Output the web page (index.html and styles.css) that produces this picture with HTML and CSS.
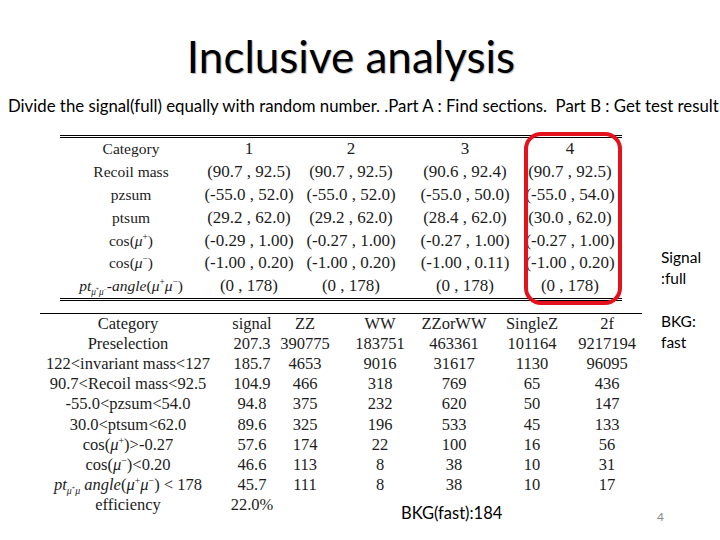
FILE: index.html
```html
<!DOCTYPE html>
<html>
<head>
<meta charset="utf-8">
<link rel="stylesheet" href="styles.css">
</head>
<body>
<div class="slide">
  <h1 class="title">Inclusive analysis</h1>
  <p class="subtitle">Divide the signal(full) equally with random number. .Part A : Find sections.&nbsp; Part B : Get test result</p>
  <div class="content">
    <div class="tables">
      <div class="t1">
        <div class="grid1">
          <div class="c lab">Category</div><div class="c">1</div><div class="c">2</div><div class="c">3</div><div class="c">4</div>
          <div class="c lab">Recoil mass</div><div class="c">(90.7 , 92.5)</div><div class="c">(90.7 , 92.5)</div><div class="c">(90.6 , 92.4)</div><div class="c">(90.7 , 92.5)</div>
          <div class="c lab">pzsum</div><div class="c">(-55.0 , 52.0)</div><div class="c">(-55.0 , 52.0)</div><div class="c">(-55.0 , 50.0)</div><div class="c">(-55.0 , 54.0)</div>
          <div class="c lab">ptsum</div><div class="c">(29.2 , 62.0)</div><div class="c">(29.2 , 62.0)</div><div class="c">(28.4 , 62.0)</div><div class="c">(30.0 , 62.0)</div>
          <div class="c lab"><span>cos(<i>μ</i><sup>+</sup>)</span></div><div class="c">(-0.29 , 1.00)</div><div class="c">(-0.27 , 1.00)</div><div class="c">(-0.27 , 1.00)</div><div class="c">(-0.27 , 1.00)</div>
          <div class="c lab"><span>cos(<i>μ</i><sup>−</sup>)</span></div><div class="c">(-1.00 , 0.20)</div><div class="c">(-1.00 , 0.20)</div><div class="c">(-1.00 , 0.11)</div><div class="c">(-1.00 , 0.20)</div>
          <div class="c lab"><span><i>pt</i><sub><i>μ</i><sup>+</sup><i>μ</i><sup>−</sup></sub>-<i>angle</i>(<i>μ</i><sup>+</sup><i>μ</i><sup>−</sup>)</span></div><div class="c">(0 , 178)</div><div class="c">(0 , 178)</div><div class="c">(0 , 178)</div><div class="c">(0 , 178)</div>
        </div>
        <div class="highlight"></div>
      </div>
      <div class="t2">
        <div class="grid2">
          <div class="c lab">Category</div><div class="c">signal</div><div class="c">ZZ</div><div class="c">WW</div><div class="c">ZZorWW</div><div class="c">SingleZ</div><div class="c">2f</div>
          <div class="c lab">Preselection</div><div class="c">207.3</div><div class="c">390775</div><div class="c">183751</div><div class="c">463361</div><div class="c">101164</div><div class="c">9217194</div>
          <div class="c lab">122&lt;invariant mass&lt;127</div><div class="c">185.7</div><div class="c">4653</div><div class="c">9016</div><div class="c">31617</div><div class="c">1130</div><div class="c">96095</div>
          <div class="c lab">90.7&lt;Recoil mass&lt;92.5</div><div class="c">104.9</div><div class="c">466</div><div class="c">318</div><div class="c">769</div><div class="c">65</div><div class="c">436</div>
          <div class="c lab">-55.0&lt;pzsum&lt;54.0</div><div class="c">94.8</div><div class="c">375</div><div class="c">232</div><div class="c">620</div><div class="c">50</div><div class="c">147</div>
          <div class="c lab">30.0&lt;ptsum&lt;62.0</div><div class="c">89.6</div><div class="c">325</div><div class="c">196</div><div class="c">533</div><div class="c">45</div><div class="c">133</div>
          <div class="c lab"><span>cos(<i>μ</i><sup>+</sup>)&gt;-0.27</span></div><div class="c">57.6</div><div class="c">174</div><div class="c">22</div><div class="c">100</div><div class="c">16</div><div class="c">56</div>
          <div class="c lab"><span>cos(<i>μ</i><sup>−</sup>)&lt;0.20</span></div><div class="c">46.6</div><div class="c">113</div><div class="c">8</div><div class="c">38</div><div class="c">10</div><div class="c">31</div>
          <div class="c lab"><span><i>pt</i><sub><i>μ</i><sup>+</sup><i>μ</i></sub> <i>angle</i>(<i>μ</i><sup>+</sup><i>μ</i><sup>−</sup>) &lt; 178</span></div><div class="c">45.7</div><div class="c">111</div><div class="c">8</div><div class="c">38</div><div class="c">10</div><div class="c">17</div>
          <div class="c lab">efficiency</div><div class="c">22.0%</div><div class="c"></div><div class="bkg">BKG(fast):184</div>
        </div>
      </div>
    </div>
    <div class="notes">
      <p class="note">Signal<br>:full</p>
      <p class="note">BKG:<br>fast</p>
      <div class="pagenum">4</div>
    </div>
  </div>
</div>
</body>
</html>
```
FILE: styles.css
```css
html, body {
  margin: 0;
  padding: 0;
  background: #ffffff;
}
.slide {
  width: 720px;
  height: 540px;
  overflow: hidden;
  font-family: Lato, "Open Sans", sans-serif;
  color: #000;
}
.title {
  margin: 0;
  padding: 30px 18px 0 0;
  font-weight: 400;
  font-size: 44px;
  line-height: 53px;
  text-align: center;
  text-shadow: 1px 1px 1px #b8b8b8;
}
.subtitle {
  margin: 13px 0 0 8px;
  font-size: 16.8px;
  line-height: 20px;
  white-space: nowrap;
}
.content {
  display: flex;
  height: 405px;
  margin-top: 19px;
}
.tables {
  width: 661px;
  flex: none;
  font-family: "Liberation Serif", "Times New Roman", serif;
  color: #1c1c1c;
}
.t1 {
  position: relative;
  width: 562px;
  margin-left: 60px;
  border-top: 3px double #000;
  border-bottom: 3px double #000;
}
.grid1 {
  display: grid;
  grid-template-columns: 142px 94px 110px 118px 92px;
  grid-auto-rows: 22.8px;
  font-size: 17px;
}
.c {
  display: flex;
  justify-content: center;
  align-items: center;
  white-space: nowrap;
  min-width: 0;
}
.grid1 .lab {
  font-size: 15.5px;
}
.grid2 .lab {
  font-size: 16.5px;
}
sup, sub {
  font-size: 0.6em;
  line-height: 0;
}
.highlight {
  position: absolute;
  left: 464px;
  top: -6px;
  width: 98px;
  height: 173px;
  box-sizing: border-box;
  border: 4px solid #e3121c;
  border-radius: 17px;
}
.t2 {
  width: 602px;
  margin: 12px 0 0 40px;
  border-top: 1px solid #000;
}
.grid2 {
  display: grid;
  grid-template-columns: 176px 72px 34px 116px 32px 124px 26px;
  grid-auto-rows: 20.2px;
  font-size: 16.5px;
}
.bkg {
  grid-column: 4 / 8;
  padding: 8px 0 0 79px;
  font-family: Lato, "Open Sans", sans-serif;
  font-size: 16.5px;
  line-height: 20px;
  white-space: nowrap;
  color: #000;
}
.notes {
  display: flex;
  flex-direction: column;
  padding-top: 112px;
  font-size: 15.5px;
  line-height: 21px;
}
.note {
  margin: 0 0 22px 0;
}
.pagenum {
  margin: auto 0 13px -4px;
  font-size: 12px;
  color: #8a8a8a;
}
```
